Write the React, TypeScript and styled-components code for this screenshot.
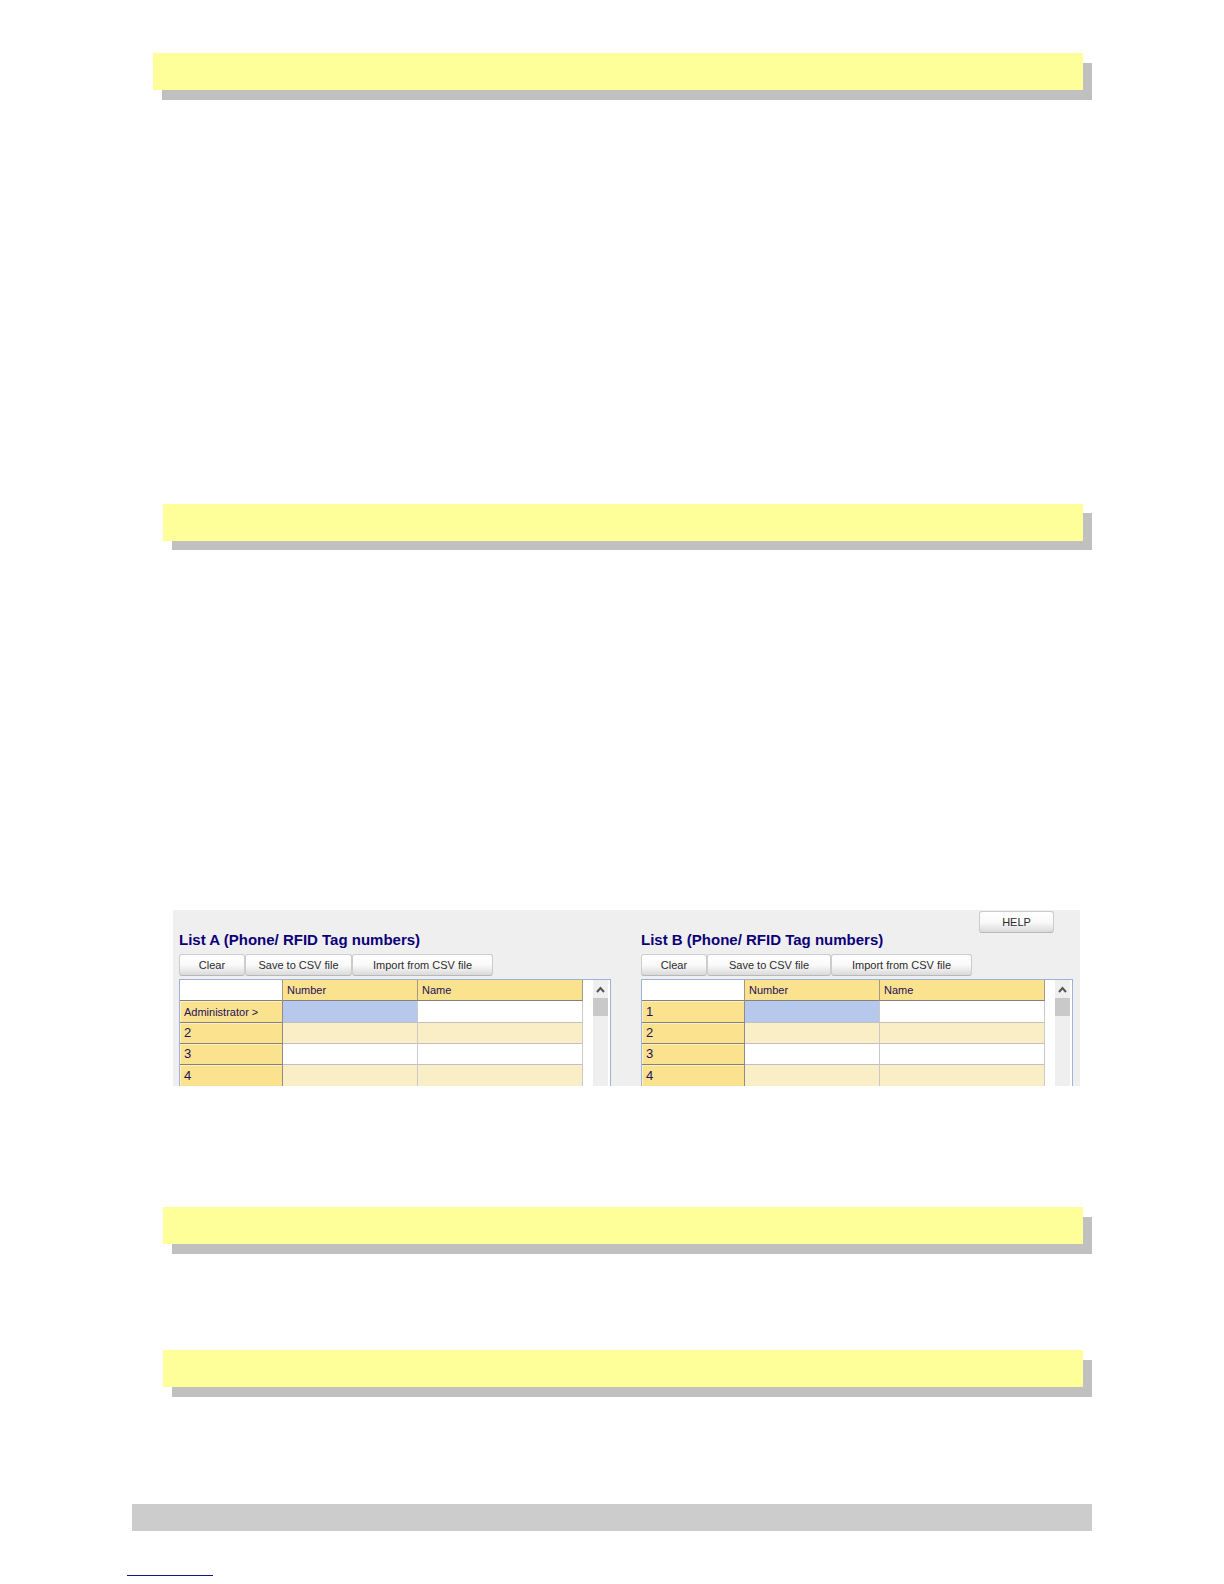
import React from "react";
import styled, { createGlobalStyle } from "styled-components";

const GlobalStyle = createGlobalStyle`
  *, *::before, *::after { box-sizing: border-box; }
  body {
    margin: 0;
    background: #fff;
    font-family: "Liberation Sans", Arial, sans-serif;
  }
`;

const Page = styled.main`
  display: flex;
  flex-direction: column;
  padding: 53px 132px 8px 127px;
`;

const Banner = styled.div<{ $indent: number; $drop?: number }>`
  height: 37px;
  margin-left: ${(p) => p.$indent}px;
  margin-right: 9px;
  background: #ffff99;
  box-shadow: 9px ${(p) => p.$drop ?? 10}px 0 #c0c0c0;
`;

const Blank = styled.div<{ $height: number }>`
  height: ${(p) => p.$height}px;
`;

const Panel = styled.section`
  display: flex;
  flex-direction: column;
  margin: 0 12px 0 46px;
  padding: 1px 7px 0 6px;
  background: #efefef;
`;

const PanelHeader = styled.header`
  display: flex;
  justify-content: flex-end;
  padding-right: 19px;
`;

const Button = styled.button<{ $width: number }>`
  width: ${(p) => p.$width}px;
  height: 22px;
  padding: 0;
  border: 1px solid #cccccc;
  border-bottom-color: #b8b8b8;
  border-radius: 3px;
  background: linear-gradient(#ffffff 0%, #fafafa 50%, #dadada 100%);
  color: #2c2c2c;
  font: 11px/20px "Liberation Sans", Arial, sans-serif;
`;

const Lists = styled.div`
  display: grid;
  grid-template-columns: 1fr 1fr;
  gap: 30px;
`;

const Title = styled.h2`
  margin: 0 0 7px;
  color: #0c0078;
  font-size: 15px;
  line-height: 14px;
`;

const Toolbar = styled.div`
  display: flex;
  margin-bottom: 3px;
`;

const Frame = styled.div`
  display: flex;
  border: 1px solid #9fb3d6;
  border-bottom: 0;
  background: #fff;
`;

const Table = styled.table`
  flex: 1;
  width: 0;
  margin-right: 10px;
  border-spacing: 0;
  table-layout: fixed;
  color: #24105c;
  font: 11px/18px "Liberation Sans", Arial, sans-serif;
  text-align: left;
`;

const Column = styled.col<{ $width?: number }>`
  width: ${(p) => (p.$width ? `${p.$width}px` : "auto")};
`;

const HeadCell = styled.th<{ $blank?: boolean }>`
  height: 21px;
  padding: 0 4px;
  border-right: 1px solid #a49a84;
  border-bottom: 1px solid #85807c;
  background: ${(p) => (p.$blank ? "#fff" : "#fbe28e")};
  font-weight: normal;
`;

const Row = styled.tr`
  height: 21px;

  &:first-child {
    height: 22px;
  }
  &:last-child > * {
    border-bottom: 0;
  }
`;

const RowLabel = styled.th<{ $long: boolean }>`
  padding: 0 4px;
  border-right: 1px solid #8f8b8b;
  border-bottom: 1px solid #85807c;
  background: #fbe28e;
  box-shadow: inset 1px 1px 0 #fdf0c4;
  font-size: ${(p) => (p.$long ? 11 : 13)}px;
  font-weight: normal;
`;

const Cell = styled.td<{ $tone: "selected" | "plain" | "stripe" }>`
  padding: 0;
  border-right: 1px solid #cbc8c8;
  border-bottom: 1px solid #c2c0c0;
  background: ${(p) => ({ selected: "#b6c8ec", plain: "#fff", stripe: "#faeec6" })[p.$tone]};
`;

const ScrollBar = styled.div`
  width: 15px;
  margin-right: 2px;
  background: #efefef;
`;

const ScrollUp = styled.button`
  display: flex;
  align-items: center;
  justify-content: center;
  width: 100%;
  height: 18px;
  padding: 0;
  border: 0;
  background: #efefef;
`;

const Thumb = styled.div`
  height: 18px;
  background: #c9c9c9;
`;

const FooterBar = styled.footer`
  height: 27px;
  margin-left: 5px;
  background: #cccccc;
`;

const Rule = styled.hr`
  width: 86px;
  height: 1px;
  margin: 44px 0 0;
  border: 0;
  background: #14148c;
`;

type ListProps = { title: string; rows: string[]; buttonWidths: number[] };

const actions = ["Clear", "Save to CSV file", "Import from CSV file"];

function NumberList({ title, rows, buttonWidths }: ListProps) {
  return (
    <section aria-label={title}>
      <Title>{title}</Title>
      <Toolbar>
        {actions.map((action, i) => (
          <Button key={action} type="button" $width={buttonWidths[i]}>
            {action}
          </Button>
        ))}
      </Toolbar>
      <Frame>
        <Table>
          <colgroup>
            <Column $width={103} />
            <Column $width={135} />
            <Column />
          </colgroup>
          <thead>
            <tr>
              <HeadCell $blank />
              <HeadCell scope="col">Number</HeadCell>
              <HeadCell scope="col">Name</HeadCell>
            </tr>
          </thead>
          <tbody>
            {rows.map((label, i) => {
              const tone = i % 2 ? "stripe" : "plain";
              return (
                <Row key={label}>
                  <RowLabel scope="row" $long={label.length > 2}>
                    {label}
                  </RowLabel>
                  <Cell $tone={i === 0 ? "selected" : tone} />
                  <Cell $tone={tone} />
                </Row>
              );
            })}
          </tbody>
        </Table>
        <ScrollBar>
          <ScrollUp type="button" aria-label="Scroll up">
            <svg width="9" height="7" viewBox="0 0 9 7" aria-hidden="true">
              <path d="M1 6 4.5 2 8 6" fill="none" stroke="#555" strokeWidth="2" />
            </svg>
          </ScrollUp>
          <Thumb />
        </ScrollBar>
      </Frame>
    </section>
  );
}

export default function App() {
  return (
    <>
      <GlobalStyle />
      <Page>
        <Banner $indent={26} />
        <Blank $height={414} />
        <Banner $indent={36} $drop={9} />
        <Blank $height={369} />
        <Panel>
          <PanelHeader>
            <Button type="button" $width={75}>
              HELP
            </Button>
          </PanelHeader>
          <Lists>
            <NumberList
              title="List A (Phone/ RFID Tag numbers)"
              rows={["Administrator >", "2", "3", "4"]}
              buttonWidths={[66, 107, 141]}
            />
            <NumberList
              title="List B (Phone/ RFID Tag numbers)"
              rows={["1", "2", "3", "4"]}
              buttonWidths={[66, 124, 141]}
            />
          </Lists>
        </Panel>
        <Blank $height={121} />
        <Banner $indent={36} />
        <Blank $height={106} />
        <Banner $indent={36} $drop={10} />
        <Blank $height={117} />
        <FooterBar />
        <Rule />
      </Page>
    </>
  );
}
